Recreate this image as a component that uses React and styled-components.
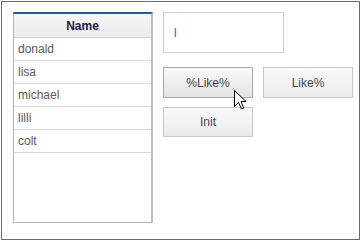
import React, { useState } from 'react';
import styled, { createGlobalStyle } from 'styled-components';

const Global = createGlobalStyle`
  body {
    margin: 1px;
    font-family: 'Liberation Sans', Arial, sans-serif;
    font-size: 12px;
    background: #fff;
  }
`;

const Frame = styled.div`
  width: 359px;
  height: 239px;
  box-sizing: border-box;
  border: 1px solid #6a6a6a;
  padding: 10px 0 0 11px;
  display: flex;
  align-items: flex-start;
  gap: 10px;
  background: #fff;
`;

const Grid = styled.div`
  width: 140px;
  height: 211px;
  flex-shrink: 0;
  box-sizing: border-box;
  border: 1px solid #b4b4b4;
  border-right: 2px solid #bcbcbc;
  border-top: 2px solid #1c5ba6;
  background: #fff;
`;

const Header = styled.div`
  height: 24px;
  box-sizing: border-box;
  display: flex;
  align-items: center;
  justify-content: center;
  font-weight: bold;
  color: #202046;
  background: linear-gradient(#f7f7f7, #ebebeb);
  border-bottom: 1px solid #cfcfcf;
`;

const Row = styled.div`
  height: 23px;
  box-sizing: border-box;
  display: flex;
  align-items: center;
  padding-left: 4px;
  color: #5a5a5a;
  border-bottom: 1px solid #dadada;
`;

const Side = styled.div`
  display: flex;
  flex-direction: column;
`;

const Input = styled.input`
  width: 121px;
  height: 41px;
  box-sizing: border-box;
  border: 1px solid #d0d0d0;
  padding: 0 0 0 10px;
  font-family: inherit;
  font-size: 12px;
  color: #5a5a5a;
  outline: none;
  margin: 0 0 14px;
`;

const Buttons = styled.div`
  display: grid;
  grid-template-columns: 90px 90px;
  column-gap: 10px;
  row-gap: 9px;
  position: relative;
`;

const Button = styled.button`
  height: ${p => p.$h || 31}px;
  box-sizing: border-box;
  border: 1px solid ${p => (p.$hover ? '#a8a8a8' : '#c8c8c8')};
  background: linear-gradient(#fafafa, ${p => (p.$hover ? '#e4e4e4' : '#ebebeb')});
  font-family: inherit;
  font-size: 12px;
  color: #4a4a4a;
  padding: 0;
  margin: 0;
`;

const Cursor = styled.svg`
  position: absolute;
  left: 71px;
  top: 23px;
`;

const names = ['donald', 'lisa', 'michael', 'lilli', 'colt'];

export default function App() {
  const [q, setQ] = useState('l');
  return (
    <>
      <Global />
      <Frame>
        <Grid>
          <Header>Name</Header>
          {names.map(n => (
            <Row key={n}>{n}</Row>
          ))}
        </Grid>
        <Side>
          <Input value={q} onChange={e => setQ(e.target.value)} />
          <Buttons>
            <Button $hover>%Like%</Button>
            <Button>Like%</Button>
            <Button $h={30}>Init</Button>
            <Cursor width="13" height="20" viewBox="0 0 13 20">
              <path d="M0.5 0.5 L0.5 16.5 L4.5 12.5 L7.5 19 L9.8 18 L7 11.5 L12 11.5 Z" fill="#fff" stroke="#000" strokeWidth="1" />
            </Cursor>
          </Buttons>
        </Side>
      </Frame>
    </>
  );
}
